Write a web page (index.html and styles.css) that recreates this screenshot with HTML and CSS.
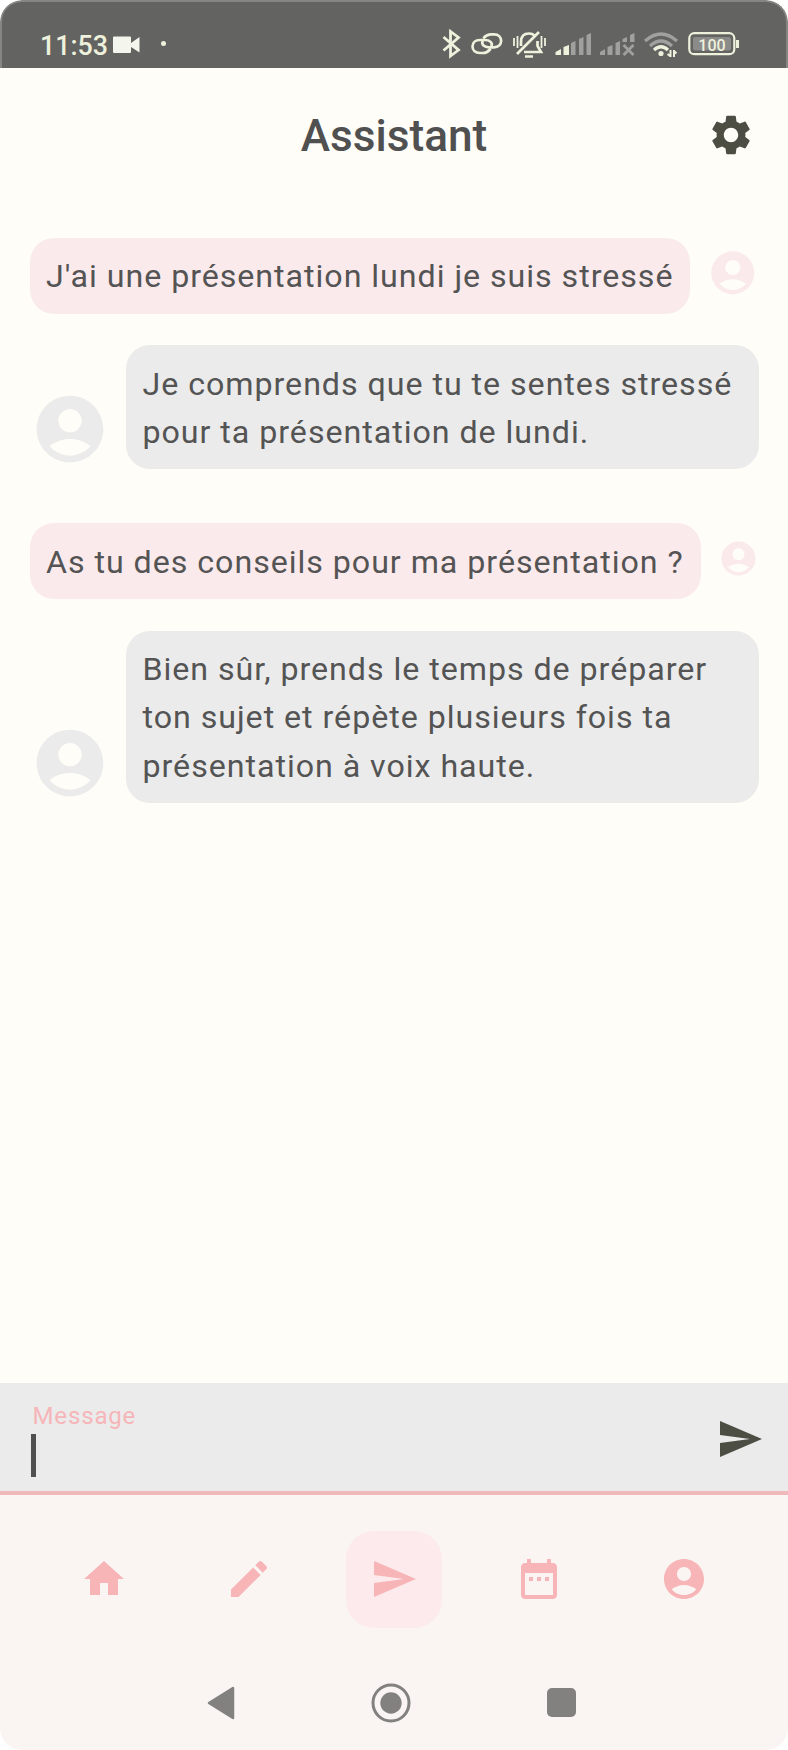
FILE: index.html
```html
<!DOCTYPE html>
<html lang="fr">
<head>
<meta charset="utf-8">
<title>Assistant</title>
<link rel="stylesheet" href="styles.css">
</head>
<body>
<svg class="defs" width="0" height="0">
  <symbol id="account" viewBox="0 0 24 24"><path d="M12 2C6.480 2 2 6.480 2 12s4.480 10 10 10 10-4.480 10-10S17.520 2 12 2zm0 4c1.930 0 3.500 1.570 3.500 3.500S13.930 13 12 13s-3.500-1.570-3.500-3.500S10.070 6 12 6zm0 14c-2.030 0-4.430-.82-6.140-2.880C7.550 15.800 9.680 15 12 15s4.450.8 6.140 2.120C16.430 19.180 14.030 20 12 20z"/></symbol>
  <symbol id="send" viewBox="0 0 24 24"><path d="M2.010 21L23 12 2.010 3 2 10l15 2-15 2z"/></symbol>
</svg>
<div class="phone">
  <header class="status">
    <span class="time">11:53</span>
    <svg class="camera" width="27" height="18" viewBox="0 0 27 18"><path d="M0 1.500Q0 .5 1 .5H17Q18 .5 18 1.500V7L26.500 1V16.500L18 11V16Q18 17 17 17H1Q0 17 0 16z"/></svg>
    <i class="dot"></i>
    <svg class="indicators" width="300" height="30" viewBox="440 29 300 30" fill="none" stroke="#eef1dc" stroke-width="2.200">
      <path stroke-width="2.800" d="M443.500 37L458.500 50 450.500 56V31.500L458.500 37.500 443.500 50.500"/>
      <g stroke-width="2.700" stroke-linecap="round"><path d="M484 37.500Q487 34.300 491 34.300H494C503.500 34.300 503.500 47.300 494 47.300H489C484 47.300 481.500 44.500 482.500 41.500"/><path d="M490 49.500Q487 53 483 53H480C470 53 470 40 480 40H485C490 40 492.800 43 491.500 46"/></g>
      <g stroke-width="2.700"><path d="M521 46V42Q521 33.500 529 33.500Q532.500 33.500 534.500 35.500M537.500 41V46L541 52H524M517 54L539 32M525 56.500H533"/><path stroke-width="1.800" d="M514 38V46M517.500 36V48M541.500 36V48M545 38V46"/></g>
      <g stroke="none">
        <path fill="#eef1dc" d="M555.500 55V52L561 49V55zM563.500 55V47L569 45V55z"/>
        <path fill="#a0a09e" d="M571 55V43L575.500 41V55zM579 55V39L583.500 37V55zM586.500 55V35L591 33V55zM600 55V52L605 49V55zM607.500 55V47L612.500 45V55zM615.500 55V43L620 41V55zM622.500 42V39L627 37V42zM630 42V35L634.500 33V42z"/>
      </g>
      <path stroke="#a0a09e" stroke-width="2.800" d="M623.500 45L633.500 55M633.500 45L623.500 55"/>
      <path stroke="#a0a09e" stroke-width="3.200" d="M645 41Q661 27 677 41M650 46Q661 36 672 46"/>
      <path stroke-width="3.200" d="M654 50Q661 43.500 668 50"/>
      <circle cx="661" cy="53.500" r="2.600" fill="#eef1dc" stroke="none"/>
      <path stroke-width="2" d="M670.500 50V57M674 50V57M667.500 54L670 56M676.500 53.500L674 51"/>
      <rect x="689.300" y="33.200" width="45" height="21" rx="5"/>
      <rect x="693" y="37" width="38" height="13.500" rx="2" fill="#8b8b89" stroke="none"/>
      <path stroke-width="3" d="M737.500 40V48"/>
      <text x="712" y="50.500" text-anchor="middle" class="battery-level">100</text>
    </svg>
  </header>
  <div class="appbar">
    <h1>Assistant</h1>
    <svg class="gear" width="48" height="48" viewBox="0 0 24 24"><path d="M19.140 12.940c.04-.3.060-.61.060-.94 0-.32-.02-.64-.07-.94l2.030-1.580c.18-.14.230-.41.120-.61l-1.920-3.320c-.12-.22-.37-.29-.59-.22l-2.390.96c-.5-.38-1.030-.7-1.620-.94l-.36-2.540c-.04-.24-.24-.41-.48-.41h-3.840c-.24 0-.43.170-.47.410l-.36 2.540c-.59.240-1.130.57-1.620.94l-2.390-.96c-.22-.08-.47 0-.59.220L2.740 8.870c-.12.210-.08.470.120.610l2.030 1.580c-.05.3-.09.630-.09.940s.02.640.070.940l-2.030 1.580c-.18.140-.23.410-.12.610l1.920 3.320c.12.220.37.290.59.220l2.390-.96c.5.380 1.030.7 1.620.94l.36 2.540c.05.240.24.410.48.410h3.840c.24 0 .44-.17.470-.41l.36-2.540c.59-.24 1.130-.56 1.620-.94l2.390.96c.22.080.47 0 .59-.22l1.920-3.320c.12-.22.070-.47-.12-.61l-2.010-1.580zM12 15.600c-1.980 0-3.600-1.620-3.600-3.600s1.620-3.600 3.600-3.600 3.600 1.620 3.600 3.600-1.620 3.600-3.600 3.600z"/></svg>
  </div>
  <main class="chat">
    <div class="row user"><p class="bubble b1">J'ai une présentation lundi je suis stressé</p><svg class="avatar a1"><use href="#account"/></svg></div>
    <div class="row bot"><svg class="avatar"><use href="#account"/></svg><p class="bubble">Je comprends que tu te sentes stressé<br>pour ta présentation de lundi.</p></div>
    <div class="row user second"><p class="bubble b2">As tu des conseils pour ma présentation ?</p><svg class="avatar a2"><use href="#account"/></svg></div>
    <div class="row bot"><svg class="avatar"><use href="#account"/></svg><p class="bubble">Bien sûr, prends le temps de préparer<br>ton sujet et répète plusieurs fois ta<br>présentation à voix haute.</p></div>
  </main>
  <div class="composer">
    <div class="field"><span class="label">Message</span><i class="caret"></i></div>
    <svg class="icon"><use href="#send"/></svg>
  </div>
  <nav class="tabs">
    <span class="tab"><svg class="icon" viewBox="0 0 24 24"><path d="M10 20v-6h4v6h5v-8h3L12 3 2 12h3v8z"/></svg></span>
    <span class="tab"><svg class="icon" viewBox="0 0 24 24"><path d="M3 17.250V21h3.750L17.810 9.940l-3.750-3.750L3 17.250zM20.710 7.040c.39-.39.390-1.020 0-1.410l-2.340-2.340c-.39-.39-1.020-.39-1.410 0l-1.830 1.830 3.750 3.750 1.830-1.830z"/></svg></span>
    <span class="tab active"><svg class="icon"><use href="#send"/></svg></span>
    <span class="tab"><svg class="icon" viewBox="0 0 24 24"><path d="M9 11H7v2h2v-2zm4 0h-2v2h2v-2zm4 0h-2v2h2v-2zm2-7h-1V2h-2v2H8V2H6v2H5c-1.110 0-1.990.9-1.990 2L3 20c0 1.100.89 2 2 2h14c1.100 0 2-.9 2-2V6c0-1.100-.9-2-2-2zm0 16H5V9h14v11z"/></svg></span>
    <span class="tab"><svg class="icon"><use href="#account"/></svg></span>
  </nav>
  <footer class="system">
    <svg width="28" height="34" viewBox="0 0 28 34"><path d="M2 17L26 2V32z" stroke-width="2.500" stroke-linejoin="round"/></svg>
    <svg width="40" height="40" viewBox="0 0 40 40"><circle cx="20" cy="20" r="18" fill="none" stroke-width="3"/><circle cx="20" cy="20" r="10.700" stroke="none"/></svg>
    <svg width="29" height="29" viewBox="0 0 29 29"><rect width="29" height="29" rx="5" stroke="none"/></svg>
  </footer>
</div>
</body>
</html>
```
FILE: styles.css
```css
* { box-sizing: border-box; }
body { margin: 0; background: #fff; font-family: Roboto, sans-serif; color: #545454; }
.defs { display: block; position: absolute; }
.phone { width: 788px; height: 1750px; display: flex; flex-direction: column; background: #fffdf8; border-radius: 22px; overflow: hidden; }

.status { height: 67.500px; flex: none; display: flex; align-items: flex-start; background: #636361; border: 2px solid #858583; border-bottom: 0; border-radius: 22px 22px 0 0; padding: 27px 46px 0 38px; }
.time { width: 73px; font-size: 26.800px; line-height: 34px; font-weight: 500; color: #eef1dc; letter-spacing: 0; }
.camera { fill: #f4f5ec; margin-top: 6.500px; }
.dot { width: 5px; height: 5px; border-radius: 50%; background: #eef1dc; margin: 12px 0 0 21px; }
.indicators { margin-left: auto; }
.battery-level { font-size: 16px; font-weight: 500; fill: #eef1dc; stroke: none; }

.appbar { height: 134px; flex: none; display: grid; grid-template-columns: 1fr auto 1fr; align-items: center; padding: 0 33.500px; }
.appbar h1 { grid-column: 2; margin: 3px 0 0; font-size: 44.200px; line-height: 56px; font-weight: 500; color: #505050; }
.gear { justify-self: end; fill: #4c4e43; }

.chat { flex: 1; padding: 36.500px 29.500px 0; }
.row { display: flex; }
.bubble { margin: 0; border-radius: 24px; padding: 14.300px 0 13.200px 16.500px; font-size: 32.200px; line-height: 48.300px; letter-spacing: .96px; white-space: nowrap; }
.user .bubble { background: #fbeaec; }
.b1 { width: 662px; }
.b2 { width: 672px; }
.bot .bubble { background: #ebebeb; width: 632.500px; }
.avatar { width: 80px; height: 80px; flex: none; }
.user .avatar { fill: #fbeaec; }
.bot .avatar { fill: #ebebeb; }
.a1.avatar { width: 51.600px; height: 51.600px; margin: 9px 0 0 16.500px; }
.a2.avatar { width: 41px; height: 41px; margin: 14.500px 0 0 16.500px; }
.bot { margin-top: 31.500px; align-items: flex-end; gap: 16.500px; }
.second { margin-top: 54px; }

.composer { height: 111.500px; flex: none; display: flex; justify-content: space-between; background: #ebebeb; border-bottom: 4px solid #efb9bb; padding: 19px 24px 0 31px; }
.field { display: flex; flex-direction: column; }
.label { font-size: 24.100px; line-height: 28px; letter-spacing: .8px; color: #f6b6b9; padding-left: 1.500px; }
.caret { width: 4.500px; height: 43px; margin-top: 3.500px; background: #505050; }
.icon { width: 48px; height: 48px; }
.composer .icon { fill: #4c4e43; margin-top: 12.500px; }

.tabs { height: 169px; flex: none; display: flex; justify-content: center; align-items: center; gap: 48.500px; background: #faf5f3; }
.tab { width: 96.500px; height: 97px; border-radius: 28px; display: grid; place-items: center; fill: #f7b5b8; }
.active { background: #fceaec; }

.system { height: 86.500px; flex: none; display: flex; align-items: center; padding: 0 212px 8px 207px; justify-content: space-between; background: #faf5f3; fill: #82817f; stroke: #82817f; }
```
